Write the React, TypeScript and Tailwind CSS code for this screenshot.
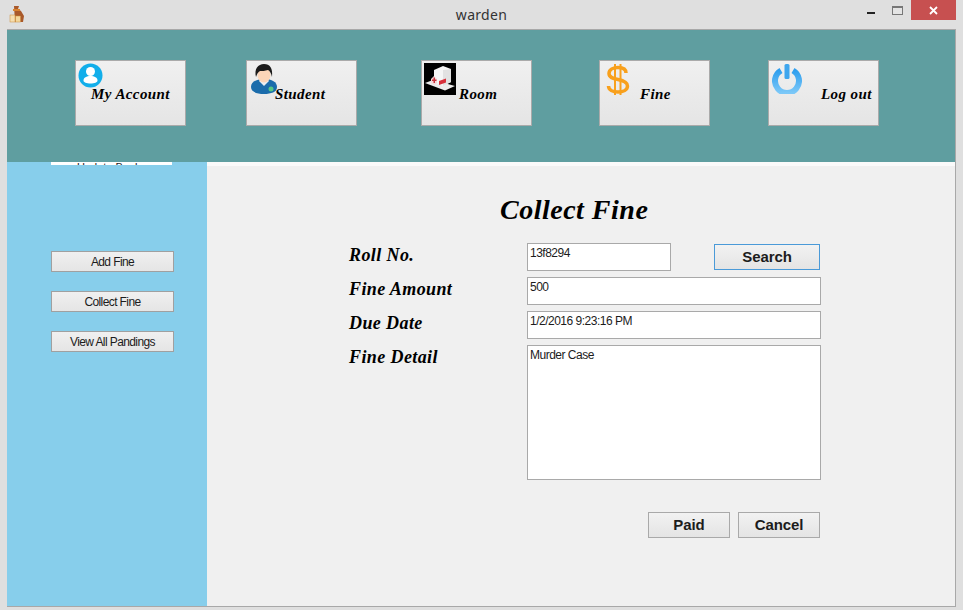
const corsiva = "font-['Liberation_Serif',serif] italic font-bold text-black"
const tahoma = "font-['Liberation_Sans',sans-serif] text-[#1c1c1c]"
const actionButton = "bg-gradient-to-b from-[#f2f2f2] to-[#e4e4e4] text-[15px] tracking-[-0.1px] font-bold text-[#1c1c1c] font-['Liberation_Sans',sans-serif]"

function AccountIcon() {
  return (
    <svg width="25" height="25" viewBox="0 0 25 25">
      <circle cx="12.5" cy="12.5" r="12" fill="#12aeea" />
      <circle cx="12.5" cy="8.5" r="4.5" fill="#fff" />
      <path d="M5.500 17.500c0-3 3-4.500 7-4.500s7 1.500 7 4.500c0 2-3 3-7 3s-7-1-7-3z" fill="#fff" />
    </svg>
  )
}

function StudentIcon() {
  return (
    <svg width="26" height="31" viewBox="0 0 26 31">
      <path d="M0 23c0-5 5-8 13-8s13 3 13 8c0 5-6 7-13 7S0 28 0 23z" fill="#1a6cab" />
      <path d="M8 17l5 5 5-5-2-2h-6z" fill="#e9eef2" />
      <ellipse cx="13" cy="11" rx="6.500" ry="7.500" fill="#fbd5b8" />
      <path d="M5 13C3 5 7 0 13 0c6 0 9 4 8 13-1-4-2-6-4-7-3 1-6 1-8 1-2 1-3 3-4 6z" fill="#1b1b1b" />
      <circle cx="20" cy="25" r="2.500" fill="#55c785" />
    </svg>
  )
}

function RoomIcon() {
  return (
    <svg width="32" height="32" viewBox="0 0 32 32">
      <rect width="32" height="32" fill="#000" />
      <path d="M1 20l8-3 22 6-10 4.500z" fill="#ececec" />
      <path d="M10 7l9-4 8 3v13l-8 4-9-4z" fill="#f6f6f6" />
      <path d="M19 7l8-1v13l-8 4z" fill="#e2e2e2" />
      <path d="M15 18l7-2.500v4l-7 2.500z" fill="#d8313c" />
      <path d="M7 16l3-3 3 3v4l-3 2-3-2z" fill="#f4d9da" />
      <path d="M9.500 14.500h1.500v2h1.500v1.500H11v2H9.500v-2H8v-1.500h1.500z" fill="#c8303a" />
    </svg>
  )
}

function DollarIcon() {
  return (
    <svg width="24" height="33" viewBox="0 0 24 33" fill="none" stroke="#f8a01c" strokeWidth="3.500">
      <path d="M20 10c0-4-3.500-5.500-8-5.500S3 6.500 3 10.500s4 5 9 6 9.500 2.500 9.500 6.500-4.500 6-9.500 6-9.500-2-9.500-6" />
      <path d="M9 1v31M14.500 1v31" strokeWidth="2" />
    </svg>
  )
}

function PowerIcon() {
  return (
    <svg width="30" height="30" viewBox="0 0 30 30" fill="none">
      <defs>
        <linearGradient id="power" x1="0" y1="0" x2="0" y2="1">
          <stop offset="0" stopColor="#2f9fee" />
          <stop offset="1" stopColor="#7cc8f8" />
        </linearGradient>
      </defs>
      <path d="M9 6.500a12 12 0 1 0 12 0" stroke="url(#power)" strokeWidth="6" />
      <rect x="12.500" y="0" width="5" height="15" rx="1.500" fill="#3ea6ee" />
    </svg>
  )
}

function NavButton({ icon, label, labelClass, className }: { icon: React.ReactNode; label: string; labelClass: string; className: string }) {
  return (
    <button className={`relative h-[66px] w-[111px] shrink-0 border border-[#aaaaaa] bg-gradient-to-b from-[#f0f0f0] to-[#e5e5e5] text-[15px] ${corsiva} ${className}`}>
      {icon}
      <span className={`absolute top-[22px] whitespace-nowrap tracking-[0.4px] ${labelClass}`}>{label}</span>
    </button>
  )
}

function SideButton({ label }: { label: string }) {
  return (
    <button className={`block h-[21px] w-[123px] border border-[#a0a0a0] bg-gradient-to-b from-[#f0f0f0] to-[#e5e5e5] text-[12px] tracking-[-0.6px] ${tahoma}`}>
      {label}
    </button>
  )
}

function Field({ label, value, multi, short }: { label: string; value: string; multi?: boolean; short?: boolean }) {
  return (
    <>
      <div className={`pt-[1px] text-[18px] leading-[22px] tracking-[0.4px] ${corsiva}`}>{label}</div>
      <div className={`border border-[#a9a9a9] bg-white pl-[2px] text-[12px] leading-[18px] tracking-[-0.5px] ${tahoma} ${multi ? "h-[135px] w-[294px]" : "h-[28px]"} ${short ? "w-[144px]" : "w-[294px]"}`}>
        {value}
      </div>
    </>
  )
}

export default function App() {
  return (
    <div className="flex h-[610px] w-[963px] flex-col overflow-hidden bg-[#dfdfdf]">
      {/* title bar */}
      <div className="relative flex h-[29px] shrink-0 items-center justify-center">
        <svg className="absolute left-[9px] top-[6px]" width="16" height="17" viewBox="0 0 16 17">
          <path d="M5 0h5L9 3l3 2 3 5-1 6H6z" fill="#a9592a" />
          <path d="M4 3h7v2H4z" fill="#d9822f" />
          <rect x="1" y="9" width="5" height="7" fill="#f5deb0" stroke="#c98a3a" strokeWidth="0.500" />
          <rect x="6.500" y="10" width="5" height="6" fill="#f3d79c" stroke="#c98a3a" strokeWidth="0.500" />
        </svg>
        <span className="font-['Noto_Sans',sans-serif] text-[14px] tracking-[0.3px] text-[#333333]">warden</span>
        <div className="absolute right-[7px] top-0 flex items-start">
          <div className="mr-[17px] mt-[12px] h-[2px] w-[8px] bg-[#222222]" />
          <div className="mr-[8px] mt-[6px] h-[9px] w-[11px] border border-[#777777] border-t-2 bg-[#e4e4e4]" />
          <div className="flex h-[20px] w-[45px] items-center justify-center bg-[#c75050]">
            <svg width="9" height="9" viewBox="0 0 9 9" stroke="#fff" strokeWidth="1.800">
              <path d="M1 1l7 7M8 1l-7 7" />
            </svg>
          </div>
        </div>
      </div>

      {/* client area */}
      <div className="ml-[7px] mr-[7px] flex h-[578px] w-[949px] flex-col border-b border-r border-t border-[#a8a8a8]">
        <div className="flex h-[132px] shrink-0 items-start bg-[#5f9ea0] pt-[30px]">
          <NavButton
            className="ml-[68px]"
            label="My Account"
            labelClass="left-[15px]"
            icon={<span className="absolute left-[2px] top-[2px]"><AccountIcon /></span>}
          />
          <NavButton
            className="ml-[60px]"
            label="Student"
            labelClass="left-[28px]"
            icon={<span className="absolute left-[4px] top-[3px]"><StudentIcon /></span>}
          />
          <NavButton
            className="ml-[64px]"
            label="Room"
            labelClass="left-[37px]"
            icon={<span className="absolute left-[2px] top-[2px]"><RoomIcon /></span>}
          />
          <NavButton
            className="ml-[67px]"
            label="Fine"
            labelClass="left-[40px]"
            icon={<span className="absolute left-[6px] top-[2px]"><DollarIcon /></span>}
          />
          <NavButton
            className="ml-[58px]"
            label="Log out"
            labelClass="left-[52px]"
            icon={<span className="absolute left-[3px] top-[3px]"><PowerIcon /></span>}
          />
        </div>

        <div className="flex min-h-0 flex-1">
          {/* sidebar */}
          <div className="w-[200px] shrink-0 bg-[#87ceeb] pl-[44px]">
            <div className={`h-[3px] w-[121px] overflow-hidden bg-white text-center text-[11px] leading-[10px] ${tahoma}`}>Update Books</div>
            <div className="mt-[86px] flex flex-col gap-[19px]">
              <SideButton label="Add Fine" />
              <SideButton label="Collect Fine" />
              <SideButton label="View All Pandings" />
            </div>
          </div>

          {/* form */}
          <div className="min-w-0 flex-1 bg-[#f0f0f0]">
            <div className="h-[4px] bg-[#fafafa]" />
            <h1 className={`ml-[293px] mt-[26px] text-[28px] leading-[36px] tracking-[0.5px] ${corsiva}`}>Collect Fine</h1>
            <div className="relative ml-[142px] mt-[15px] grid w-[474px] grid-cols-[178px_1fr] gap-y-[6px]">
              <Field label="Roll No." value="13f8294" short />
              <Field label="Fine Amount" value="500" />
              <Field label="Due Date" value="1/2/2016 9:23:16 PM" />
              <Field label="Fine Detail" value="Murder Case" multi />
              <button className={`absolute left-[365px] top-[1px] h-[26px] w-[106px] border border-[#4a9ad8] ${actionButton}`}>
                Search
              </button>
            </div>
            <div className="ml-[441px] mt-[32px] flex gap-[8px]">
              <button className={`h-[26px] w-[82px] border border-[#a9a9a9] ${actionButton}`}>Paid</button>
              <button className={`h-[26px] w-[82px] border border-[#a9a9a9] ${actionButton}`}>Cancel</button>
            </div>
          </div>
        </div>
      </div>
    </div>
  )
}
